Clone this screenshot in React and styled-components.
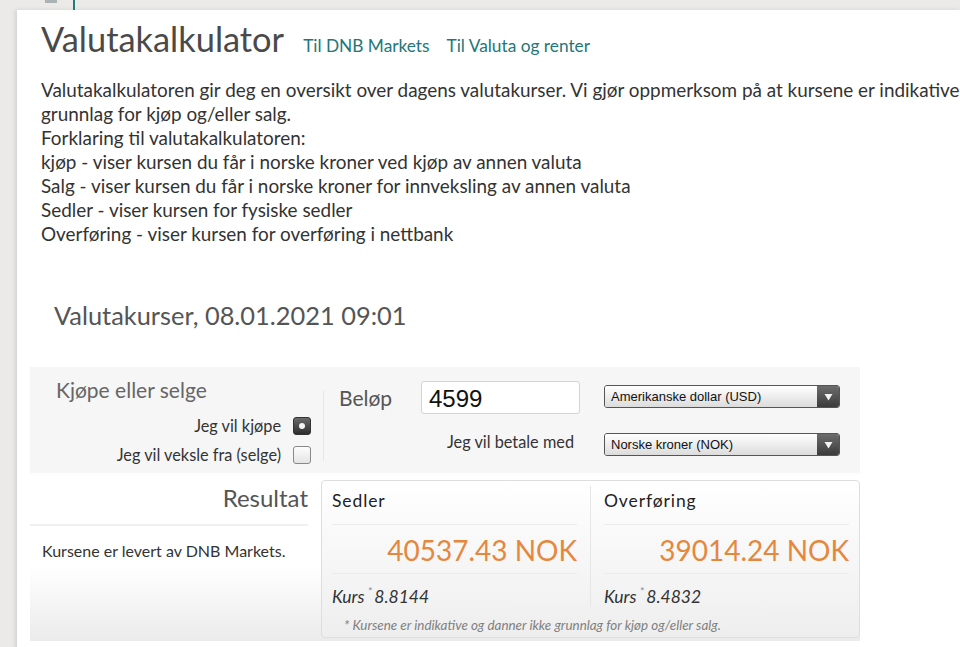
import React, { useState } from "react";
import styled, { createGlobalStyle } from "styled-components";

const GlobalStyle = createGlobalStyle`
  html, body {
    margin: 0;
    background: #ebeae8;
    overflow: hidden;
  }
  body {
    font-family: Lato, "Open Sans", sans-serif;
    color: #333;
  }
`;

const TopStrip = styled.div`
  height: 10px;
  display: flex;
  align-items: flex-start;
  padding-left: 45px;
`;

const StripMark = styled.span`
  width: 12px;
  height: 3px;
  background: #a9b3b3;
`;

const StripTick = styled.span`
  width: 2px;
  height: 10px;
  margin-left: 16px;
  background: #1f7c7a;
`;

const Card = styled.main`
  margin-left: 17px;
  background: #fff;
  min-height: 640px;
  box-shadow: -2px 0 4px rgba(0, 0, 0, 0.1);
  padding-top: 8px;
  overflow: hidden;
`;

const TitleRow = styled.div`
  display: flex;
  align-items: baseline;
  gap: 17px;
  padding-left: 24px;
`;

const Title = styled.h1`
  margin: 0 2px 0 0;
  font-size: 34.4px;
  font-weight: 400;
  color: #4a4a4a;
`;

const TopLink = styled.a`
  font-size: 17.3px;
  color: #22777a;
  text-decoration: none;
`;

const Intro = styled.div`
  margin-top: 19px;
  padding-left: 24px;
  font-size: 18.9px;
  line-height: 24px;
  color: #333;
  white-space: nowrap;
`;

const RatesHeading = styled.h2`
  margin: 54px 0 0 37px;
  font-size: 25.4px;
  font-weight: 400;
  color: #555;
`;

const Panel = styled.section`
  margin: 37px 0 0 13px;
  width: 830px;
  background: #f6f6f6;
`;

const InputRow = styled.div`
  display: flex;
  height: 106px;
  border-bottom: 2px solid #fdfdfd;
`;

const ChoiceBlock = styled.div`
  flex: 0 0 293px;
  padding: 10px 12px 0 26px;
  box-sizing: border-box;
`;

const BlockLabel = styled.div`
  font-size: 21px;
  color: #666;
`;

const RadioList = styled.div`
  display: flex;
  flex-direction: column;
  align-items: flex-end;
  gap: 10px;
  margin-top: 14px;
`;

const RadioLabel = styled.label`
  display: flex;
  align-items: center;
  gap: 12px;
  font-size: 16.3px;
  color: #333;
  cursor: pointer;
`;

const RadioBox = styled.span`
  width: 18px;
  height: 18px;
  border-radius: 3px;
  box-sizing: border-box;
  display: flex;
  align-items: center;
  justify-content: center;
  border: 1px solid ${(p) => (p.$on ? "#333" : "#888")};
  background: ${(p) =>
    p.$on
      ? "linear-gradient(#6a6a6a, #2e2e2e)"
      : "linear-gradient(#fdfdfd, #e4e4e4)"};

  &::after {
    content: "";
    display: ${(p) => (p.$on ? "block" : "none")};
    width: 6px;
    height: 6px;
    border-radius: 50%;
    background: #f4f4f4;
  }
`;

const AmountBlock = styled.div`
  flex: 0 0 257px;
  margin: 24px 0 12px;
  padding: 0 0 0 15px;
  border-left: 1px solid #e6e6e6;
  box-sizing: border-box;
  display: flex;
  flex-direction: column;
`;

const AmountRow = styled.div`
  display: flex;
  align-items: center;
  margin-top: -10px;
`;

const AmountLabel = styled.span`
  width: 82px;
  font-size: 21px;
  color: #555;
`;

const AmountInput = styled.input`
  width: 159px;
  height: 33px;
  box-sizing: border-box;
  border: 1px solid #d4d4d4;
  border-radius: 3px;
  padding: 2px 7px 0;
  font-family: "Liberation Sans", Arial, sans-serif;
  font-size: 24px;
  color: #111;
  background: #fff;
  outline: none;
`;

const PayLabel = styled.div`
  margin-top: 18px;
  padding-right: 6px;
  text-align: right;
  font-size: 16.3px;
  color: #333;
`;

const SelectBlock = styled.div`
  padding: 18px 0 0 24px;
  display: flex;
  flex-direction: column;
  gap: 25px;
`;

const Select = styled.div`
  width: 236px;
  height: 23px;
  box-sizing: border-box;
  display: flex;
  border: 1px solid #555;
  border-radius: 3px;
  overflow: hidden;
  font-family: "Liberation Sans", Arial, sans-serif;
  font-size: 13px;
  color: #111;
`;

const SelectText = styled.span`
  flex: 1;
  padding-left: 6px;
  line-height: 21px;
  background: linear-gradient(#ffffff, #dcdcdc);
`;

const SelectArrow = styled.span`
  width: 22px;
  display: flex;
  align-items: center;
  justify-content: center;
  background: linear-gradient(#6c6c6c, #3c3c3c);
`;

const ResultArea = styled.div`
  display: flex;
  height: 166px;
  background: linear-gradient(#fff 55%, #ebebeb);
`;

const ResultSide = styled.div`
  width: 291px;
  padding-top: 4px;
`;

const ResultHeading = styled.div`
  margin-right: 13px;
  height: 45px;
  line-height: 38px;
  text-align: right;
  font-size: 24px;
  color: #555;
  border-bottom: 2px solid #f0f0f0;
`;

const ProviderNote = styled.p`
  margin: 15px 0 0 12px;
  font-size: 16px;
  color: #333;
`;

const ResultCard = styled.div`
  margin: 5px 0 3px;
  flex: 1;
  border: 1px solid #dedede;
  border-radius: 4px;
  background: linear-gradient(#fff, #eeeeee);
  padding: 0 10px;
  display: flex;
  flex-direction: column;
`;

const ResultCols = styled.div`
  display: grid;
  grid-template-columns: 258px 1fr;
`;

const ResultCol = styled.div`
  padding: ${(p) => (p.$first ? "0 13px 0 0" : "0 0 0 13px")};
  border-left: ${(p) => (p.$first ? "none" : "1px solid #e6e6e6")};
  margin: 5px 0 12px;
`;

const ColTitle = styled.div`
  height: 38px;
  line-height: 30px;
  font-size: 17.5px;
  letter-spacing: 0.9px;
  color: #222;
  border-bottom: 1px solid #ececec;
`;

const Amount = styled.div`
  height: 48px;
  line-height: 50px;
  text-align: right;
  font-size: 28px;
  color: #e5873d;
  border-bottom: 1px solid #ececec;
`;

const Rate = styled.div`
  padding-top: 10px;
  font-size: 17.5px;
  font-style: italic;
  color: #333;

  sup {
    font-size: 12px;
    color: #888;
    margin: 0 2px 0 3px;
  }
`;

const Footnote = styled.div`
  padding-left: 12px;
  margin-top: -2px;
  font-size: 13.4px;
  font-style: italic;
  color: #808080;
`;

const Caret = () => (
  <svg width="9" height="8" viewBox="0 0 9 8">
    <path d="M0.5 1h8L4.5 7.5z" fill="#f2f2f2" />
  </svg>
);

const results = [
  { title: "Sedler", amount: "40537.43 NOK", rate: "8.8144" },
  { title: "Overføring", amount: "39014.24 NOK", rate: "8.4832" },
];

const App = () => {
  const [mode, setMode] = useState("buy");
  const [amount, setAmount] = useState("4599");

  return (
    <>
      <GlobalStyle />
      <TopStrip>
        <StripMark />
        <StripTick />
      </TopStrip>
      <Card>
        <TitleRow>
          <Title>Valutakalkulator</Title>
          <TopLink href="#">Til DNB Markets</TopLink>
          <TopLink href="#">Til Valuta og renter</TopLink>
        </TitleRow>
        <Intro>
          Valutakalkulatoren gir deg en oversikt over dagens valutakurser. Vi gjør oppmerksom på at kursene er indikative og danner ikke
          <br />
          grunnlag for kjøp og/eller salg.
          <br />
          Forklaring til valutakalkulatoren:
          <br />
          kjøp - viser kursen du får i norske kroner ved kjøp av annen valuta
          <br />
          Salg - viser kursen du får i norske kroner for innveksling av annen valuta
          <br />
          Sedler - viser kursen for fysiske sedler
          <br />
          Overføring - viser kursen for overføring i nettbank
        </Intro>
        <RatesHeading>Valutakurser, 08.01.2021 09:01</RatesHeading>
        <Panel>
          <InputRow>
            <ChoiceBlock>
              <BlockLabel>Kjøpe eller selge</BlockLabel>
              <RadioList>
                <RadioLabel onClick={() => setMode("buy")}>
                  Jeg vil kjøpe <RadioBox $on={mode === "buy"} />
                </RadioLabel>
                <RadioLabel onClick={() => setMode("sell")}>
                  Jeg vil veksle fra (selge) <RadioBox $on={mode === "sell"} />
                </RadioLabel>
              </RadioList>
            </ChoiceBlock>
            <AmountBlock>
              <AmountRow>
                <AmountLabel>Beløp</AmountLabel>
                <AmountInput value={amount} onChange={(e) => setAmount(e.target.value)} />
              </AmountRow>
              <PayLabel>Jeg vil betale med</PayLabel>
            </AmountBlock>
            <SelectBlock>
              <Select>
                <SelectText>Amerikanske dollar (USD)</SelectText>
                <SelectArrow><Caret /></SelectArrow>
              </Select>
              <Select>
                <SelectText>Norske kroner (NOK)</SelectText>
                <SelectArrow><Caret /></SelectArrow>
              </Select>
            </SelectBlock>
          </InputRow>
          <ResultArea>
            <ResultSide>
              <ResultHeading>Resultat</ResultHeading>
              <ProviderNote>Kursene er levert av DNB Markets.</ProviderNote>
            </ResultSide>
            <ResultCard>
              <ResultCols>
                {results.map((r, i) => (
                  <ResultCol key={r.title} $first={i === 0}>
                    <ColTitle>{r.title}</ColTitle>
                    <Amount>{r.amount}</Amount>
                    <Rate>Kurs<sup>*</sup>{r.rate}</Rate>
                  </ResultCol>
                ))}
              </ResultCols>
              <Footnote>* Kursene er indikative og danner ikke grunnlag for kjøp og/eller salg.</Footnote>
            </ResultCard>
          </ResultArea>
        </Panel>
      </Card>
    </>
  );
};

export default App;
